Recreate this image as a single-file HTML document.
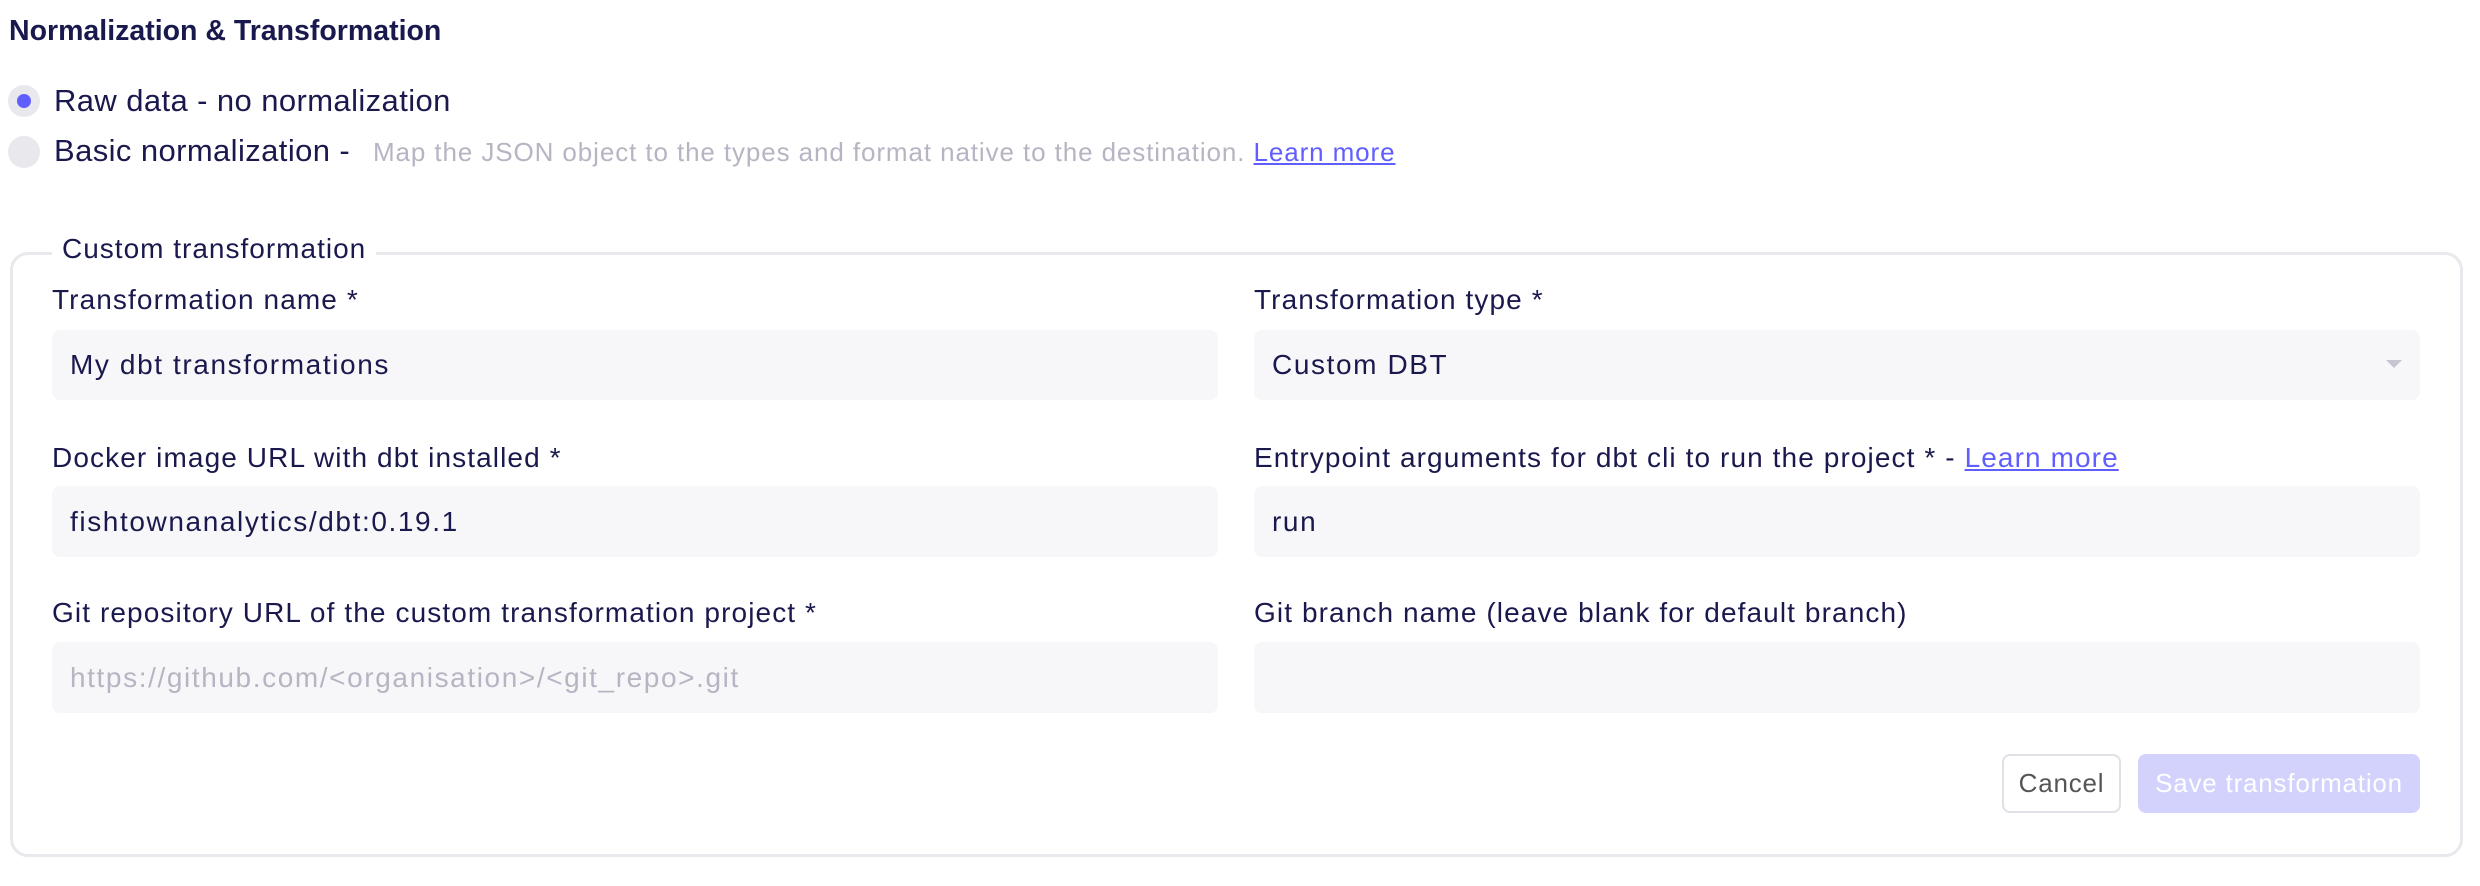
<!DOCTYPE html>
<html><head><meta charset="utf-8"><style>
*{box-sizing:border-box;margin:0;padding:0}
body{width:2480px;height:886px;background:#fff;font-family:"Liberation Sans",sans-serif;color:#1a194d;position:relative;overflow:hidden}
.a{position:absolute;white-space:nowrap}
.title{left:9px;top:15px;font-size:28.5px;font-weight:bold}
.radio{position:absolute;width:32px;height:32px;border-radius:50%;background:#e8e8ed}
.radio.on::after{content:"";position:absolute;left:9px;top:9px;width:14px;height:14px;border-radius:50%;background:#615eff}
.rl{font-size:31px;letter-spacing:0.4px}
.desc{font-size:26px;color:#b5b5c3;letter-spacing:0.9px}
a{color:#615eff;text-decoration:underline}
.fs{position:absolute;left:10px;top:252px;width:2453px;height:605px;border:3px solid #e8e8ed;border-radius:18px}
.legend{left:52px;top:233px;background:#fff;padding:0 10px;font-size:28px;letter-spacing:1px}
.lab{font-size:28px;letter-spacing:1.1px}
.inp{position:absolute;background:#f7f7f9;border-radius:8px;font-size:28px;letter-spacing:1.6px;padding-left:18px;display:flex;align-items:center;color:#1a194d}
.ph{color:#b5b5c3}
.btn{position:absolute;border-radius:8px;font-size:26px;letter-spacing:0.8px;display:flex;align-items:center;justify-content:center}
</style></head><body>
<div class="a title">Normalization &amp; Transformation</div>
<div class="radio on" style="left:8px;top:85px"></div>
<div class="a rl" style="left:54px;top:83px">Raw data - no normalization</div>
<div class="radio" style="left:8px;top:136px"></div>
<div class="a rl" style="left:54px;top:133px">Basic normalization -</div>
<div class="a desc" style="left:373px;top:137px">Map the JSON object to the types and format native to the destination. <a>Learn more</a></div>

<div class="fs"></div>
<div class="a legend">Custom transformation</div>

<div class="a lab" style="left:52px;top:284px">Transformation name *</div>
<div class="inp" style="left:52px;top:330px;width:1166px;height:70px">My dbt transformations</div>
<div class="a lab" style="left:1254px;top:284px">Transformation type *</div>
<div class="inp" style="left:1254px;top:330px;width:1166px;height:70px">Custom DBT
<svg style="position:absolute;left:1132px;top:30px" width="16" height="10"><path d="M0 0H16L8 8Z" fill="#c5c5d3"/></svg></div>

<div class="a lab" style="left:52px;top:442px">Docker image URL with dbt installed *</div>
<div class="inp" style="left:52px;top:486px;width:1166px;height:71px">fishtownanalytics/dbt:0.19.1</div>
<div class="a lab" style="left:1254px;top:442px">Entrypoint arguments for dbt cli to run the project * - <a>Learn more</a></div>
<div class="inp" style="left:1254px;top:486px;width:1166px;height:71px">run</div>

<div class="a lab" style="left:52px;top:597px">Git repository URL of the custom transformation project *</div>
<div class="inp ph" style="left:52px;top:642px;width:1166px;height:71px">https://github.com/&lt;organisation&gt;/&lt;git_repo&gt;.git</div>
<div class="a lab" style="left:1254px;top:597px">Git branch name (leave blank for default branch)</div>
<div class="inp" style="left:1254px;top:642px;width:1166px;height:71px"></div>

<div class="btn" style="left:2002px;top:754px;width:119px;height:59px;border:2px solid #e0e0e6;color:#555;">Cancel</div>
<div class="btn" style="left:2138px;top:754px;width:282px;height:59px;background:#d2d2fc;color:#fff">Save transformation</div>
</body></html>
